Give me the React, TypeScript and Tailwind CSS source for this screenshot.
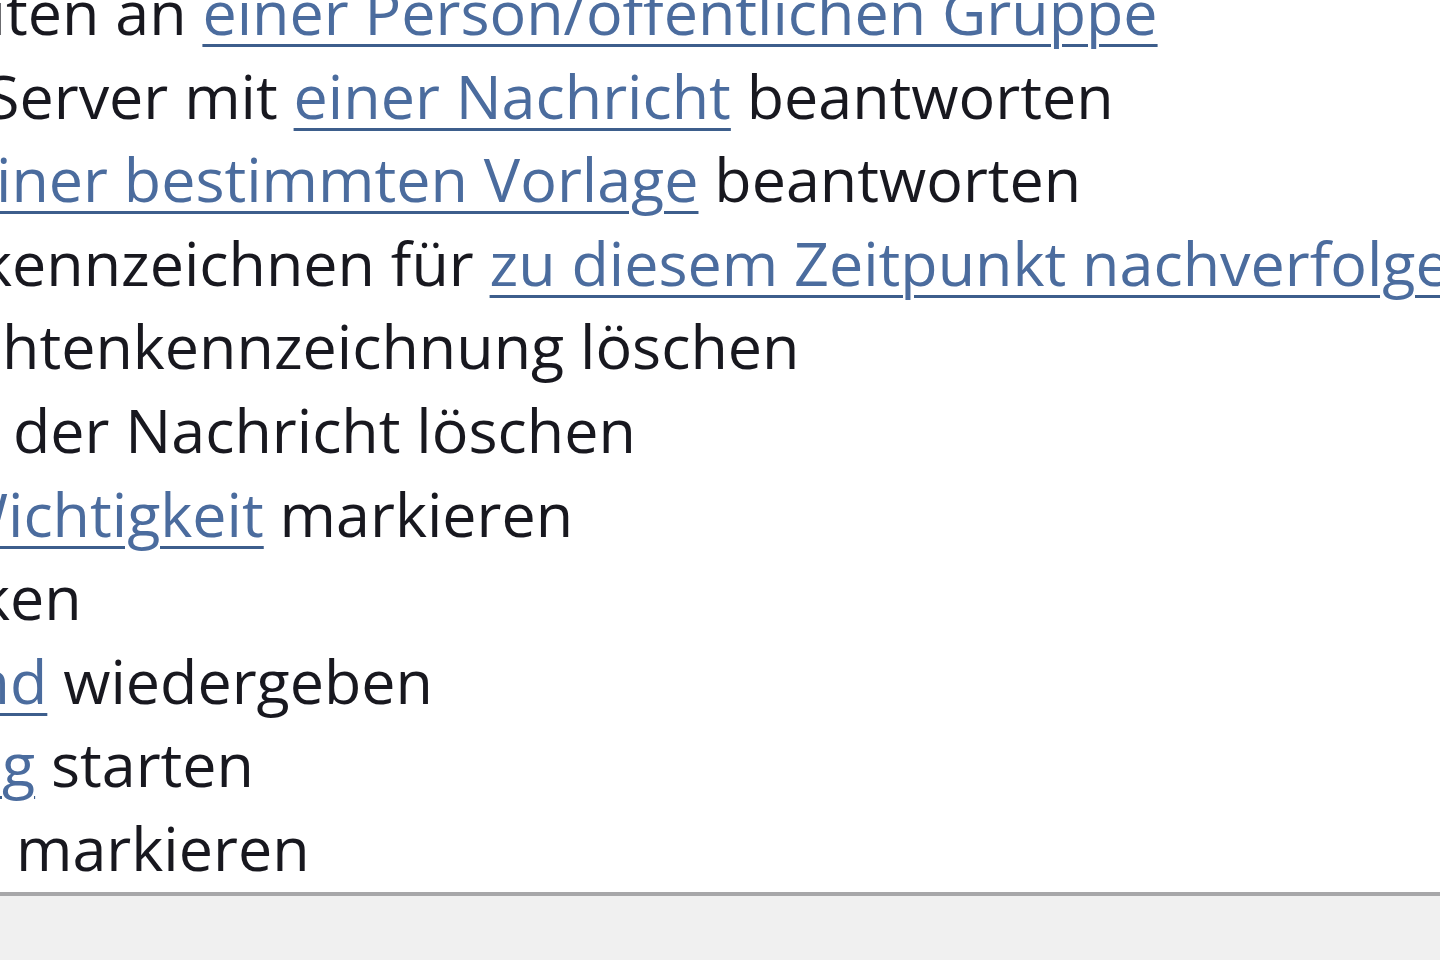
import React from "react";

function L({ children }: { children: React.ReactNode }) {
  return (
    <span className="text-[#4b6c9e] underline decoration-[#3d5e8c] decoration-3 underline-offset-[9px]">
      {children}
    </span>
  );
}

function Row({
  pad,
  prefix,
  children,
}: {
  pad: string;
  prefix: React.ReactNode;
  children: React.ReactNode;
}) {
  return (
    <div className={`flex ${pad}`}>
      <span className="flex w-0 shrink-0 justify-end">
        <span className="shrink-0">{prefix}</span>
      </span>
      <span className="shrink-0">{children}</span>
    </div>
  );
}

export default function App() {
  return (
    <div className="flex h-[960px] w-[1440px] flex-col overflow-hidden bg-[#f0f0f0]">
      <div className="h-[896px] shrink-0 overflow-hidden border-b-4 border-[#a7a7a9] bg-white">
        <div className="-ml-[40px] -mt-[30px] flex flex-col whitespace-nowrap font-['Open_Sans',sans-serif] text-[61px] leading-[83.6px] text-[#18181f]">
          <Row pad="pl-[46px]" prefix={<>diese umlei</>}>
            ten an <L>einer Person/öffentlichen Gruppe</L>
          </Row>
          <Row pad="pl-[26px]" prefix={<>Antwort vom{"\u00a0"}</>}>
            Server mit <L>einer Nachricht</L> beantworten
          </Row>
          <Row pad="pl-[36px]" prefix={<>mit <L>e</L></>}>
            <L>iner bestimmten Vorlage</L> beantworten
          </Row>
          <Row pad="pl-[52px]" prefix={<>Nachricht k</>}>
            ennzeichnen für <L>zu diesem Zeitpunkt nachverfolgen</L>
          </Row>
          <Row pad="pl-[42px]" prefix={<>Nachric</>}>
            htenkennzeichnung löschen
          </Row>
          <Row pad="pl-[53px]" prefix={<>Kategorie{"\u00a0"}</>}>
            der Nachricht löschen
          </Row>
          <Row pad="pl-[48px]" prefix={<>diese mit <L>W</L></>}>
            <L>ichtigkeit</L> markieren
          </Row>
          <Row pad="pl-[50px]" prefix={<>diese druck</>}>
            en
          </Row>
          <Row pad="pl-[50px]" prefix={<>einen <L>Soun</L></>}>
            <L>d</L> wiedergeben
          </Row>
          <Row pad="pl-[42px]" prefix={<>eine <L>Anwendun</L></>}>
            <L>g</L> starten
          </Row>
          <Row pad="pl-[56px]" prefix={<>als gelesen{"\u00a0"}</>}>
            markieren
          </Row>
        </div>
      </div>
      <div className="flex-1 bg-[#f0f0f0]" />
    </div>
  );
}
